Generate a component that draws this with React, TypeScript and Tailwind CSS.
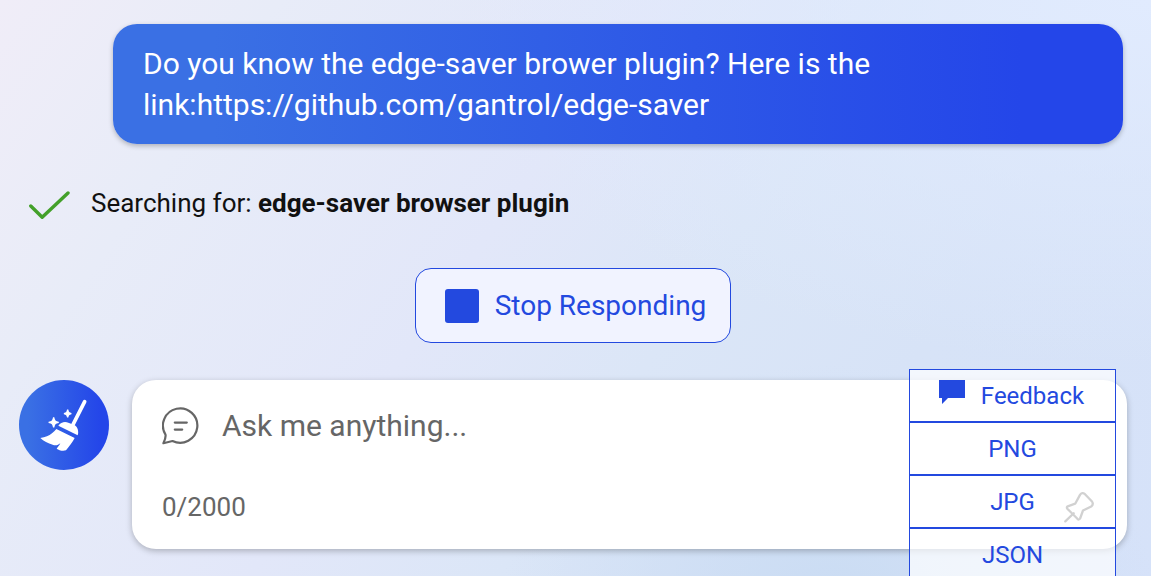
import React from "react";

function CheckIcon() {
  return (
    <svg className="h-[30px] w-[42px] shrink-0" viewBox="0 0 42 30" fill="none" aria-hidden="true">
      <path d="M2.8 16 14.2 27.3 40 3" stroke="#43a02a" strokeWidth="3.4" strokeLinecap="round" strokeLinejoin="round" />
    </svg>
  );
}

function BroomIcon() {
  return (
    <svg className="size-[70px]" viewBox="0 0 210 210" fill="#fff" aria-hidden="true">
      <path d="M167 35 132 104" stroke="#fff" strokeWidth="11" strokeLinecap="round" />
      <path d="M88 107C95 97 107 94 118 98L136 105C146 111 150 123 146 136Z" />
      <path d="M82 117 137 144C130 157 121 169 111 181C101 184 90 181 83 176C87 170 91 166 94 160C87 166 79 168 71 164C57 160 44 154 34 144C49 142 60 138 69 130C74 126 78 121 82 117Z" />
      <path d="M74 82C76 93 78 95 89 97C78 99 76 101 74 112C72 101 70 99 59 97C70 95 72 93 74 82Z" stroke="#fff" strokeWidth="4" />
      <path d="M116 59C118 68 119 69 127 71C119 73 118 74 116 82C114 74 113 73 105 71C113 69 114 68 116 59Z" stroke="#fff" strokeWidth="4" />
    </svg>
  );
}

function ChatIcon() {
  return (
    <svg className="size-[38px] shrink-0" viewBox="0 0 38 38" fill="none" stroke="#666" strokeWidth="2.2" strokeLinecap="round" strokeLinejoin="round" aria-hidden="true">
      <path d="M3.5 27.6A17.2 17.2 0 1 1 10.5 34L1.4 36.2Q4.1 30.5 3.5 27.6Z" />
      <path d="M12.8 15.6H24.8M12.8 22.6H20.2" />
    </svg>
  );
}

function PinIcon() {
  return (
    <svg className="size-8" viewBox="0 0 32 32" fill="none" stroke="#666" strokeWidth="2.3" strokeLinecap="round" strokeLinejoin="round" aria-hidden="true">
      <path d="M2.3 30.4 10.7 22.2" />
      <path d="M4.7 15.3 12.2 12.7 17 3.9Q19 .9 22 3.2L29 10.5Q30.9 13.5 28.2 15.5L20 19.5 17.1 27.5Q16 29.3 14.4 27.8L4.3 17.7Q3.3 16 4.7 15.3Z" />
    </svg>
  );
}

function FeedbackIcon() {
  return (
    <svg className="h-6 w-[26px] shrink-0" viewBox="0 0 26 24" fill="#2349df" aria-hidden="true">
      <path d="M0 0H26V18H9L3 24V18H0Z" />
    </svg>
  );
}

const menuItem =
  "flex h-[53px] w-full cursor-pointer items-center justify-center border border-[#2349df] bg-white/70 text-[24px]";

function ExportMenu() {
  return (
    <div className="absolute -top-[11px] right-[11px] w-[207px] text-[#2349df]">
      <button type="button" className={menuItem + " gap-4 pr-0.5"}>
        <span className="pb-2"><FeedbackIcon /></span>
        Feedback
      </button>
      <button type="button" className={menuItem}>PNG</button>
      <button type="button" className={menuItem}>JPG</button>
      <button type="button" className={menuItem}>JSON</button>
    </div>
  );
}

export default function App() {
  return (
    <main className="flex min-h-screen flex-col overflow-hidden bg-[radial-gradient(ellipse_at_100%_0%,#e1ebfe_0%,transparent_45%),radial-gradient(ellipse_at_72%_105%,#cadcf3_0%,transparent_28%),linear-gradient(125deg,#f0edf8_0%,#e8ecf8_18%,#e2e7f9_42%,#dbe6f7_58%,#d7e3f7_75%,#d6e2f9_100%)] pt-6 pr-6 pb-[27px] pl-[19px] font-[Roboto,sans-serif]">
      <p className="mr-1 ml-[94px] rounded-[24px] bg-[linear-gradient(90deg,#3a70e4_10%,#2446e9_90%)] px-[30px] py-[19px] text-[30px] leading-[41px] text-white shadow-[0_2px_5px_rgba(0,0,0,0.25)]">
        Do you know the edge-saver brower plugin? Here is the
        <br />
        link:https://github.com/gantrol/edge-saver
      </p>

      <div className="mt-[42px] ml-[9px] flex items-center gap-[21px] text-[26px] leading-8 text-[#111]">
        <span className="pt-1"><CheckIcon /></span>
        <p>
          Searching for: <strong className="font-bold">edge-saver browser plugin</strong>
        </p>
      </div>

      <button
        type="button"
        className="mt-12 flex h-[75px] cursor-pointer items-center gap-4 self-center rounded-[16px] border border-[#2349df] bg-[#f1f3ff] pr-6 pl-[29px] text-[28px] text-[#2349df]"
      >
        <span className="size-[34px] rounded-[3px] bg-[#2349df]" />
        Stop Responding
      </button>

      <form className="mt-[37px] flex items-start gap-[23px]">
        <button
          type="button"
          aria-label="New topic"
          className="flex size-[90px] shrink-0 cursor-pointer items-center justify-center rounded-full bg-[linear-gradient(90deg,#3a70e4_10%,#2446e9_90%)]"
        >
          <BroomIcon />
        </button>
        <div className="relative flex h-[169px] min-w-0 flex-1 flex-col justify-between rounded-[24px] bg-white pt-[25px] pr-8 pb-[26px] pl-[30px] text-[#666] shadow-[0_2px_6px_rgba(0,0,0,0.25)]">
          <label className="flex items-center gap-[22px]">
            <ChatIcon />
            <textarea
              rows={1}
              aria-label="Message"
              placeholder="Ask me anything..."
              className="h-[41px] w-full resize-none overflow-hidden text-[30px] leading-[41px] outline-none placeholder:text-[#666]"
            />
          </label>
          <div className="flex items-center justify-between">
            <span className="text-[26px] leading-8">0/2000</span>
            <button type="button" aria-label="Pin" className="cursor-pointer">
              <PinIcon />
            </button>
          </div>
          <ExportMenu />
        </div>
      </form>
    </main>
  );
}
